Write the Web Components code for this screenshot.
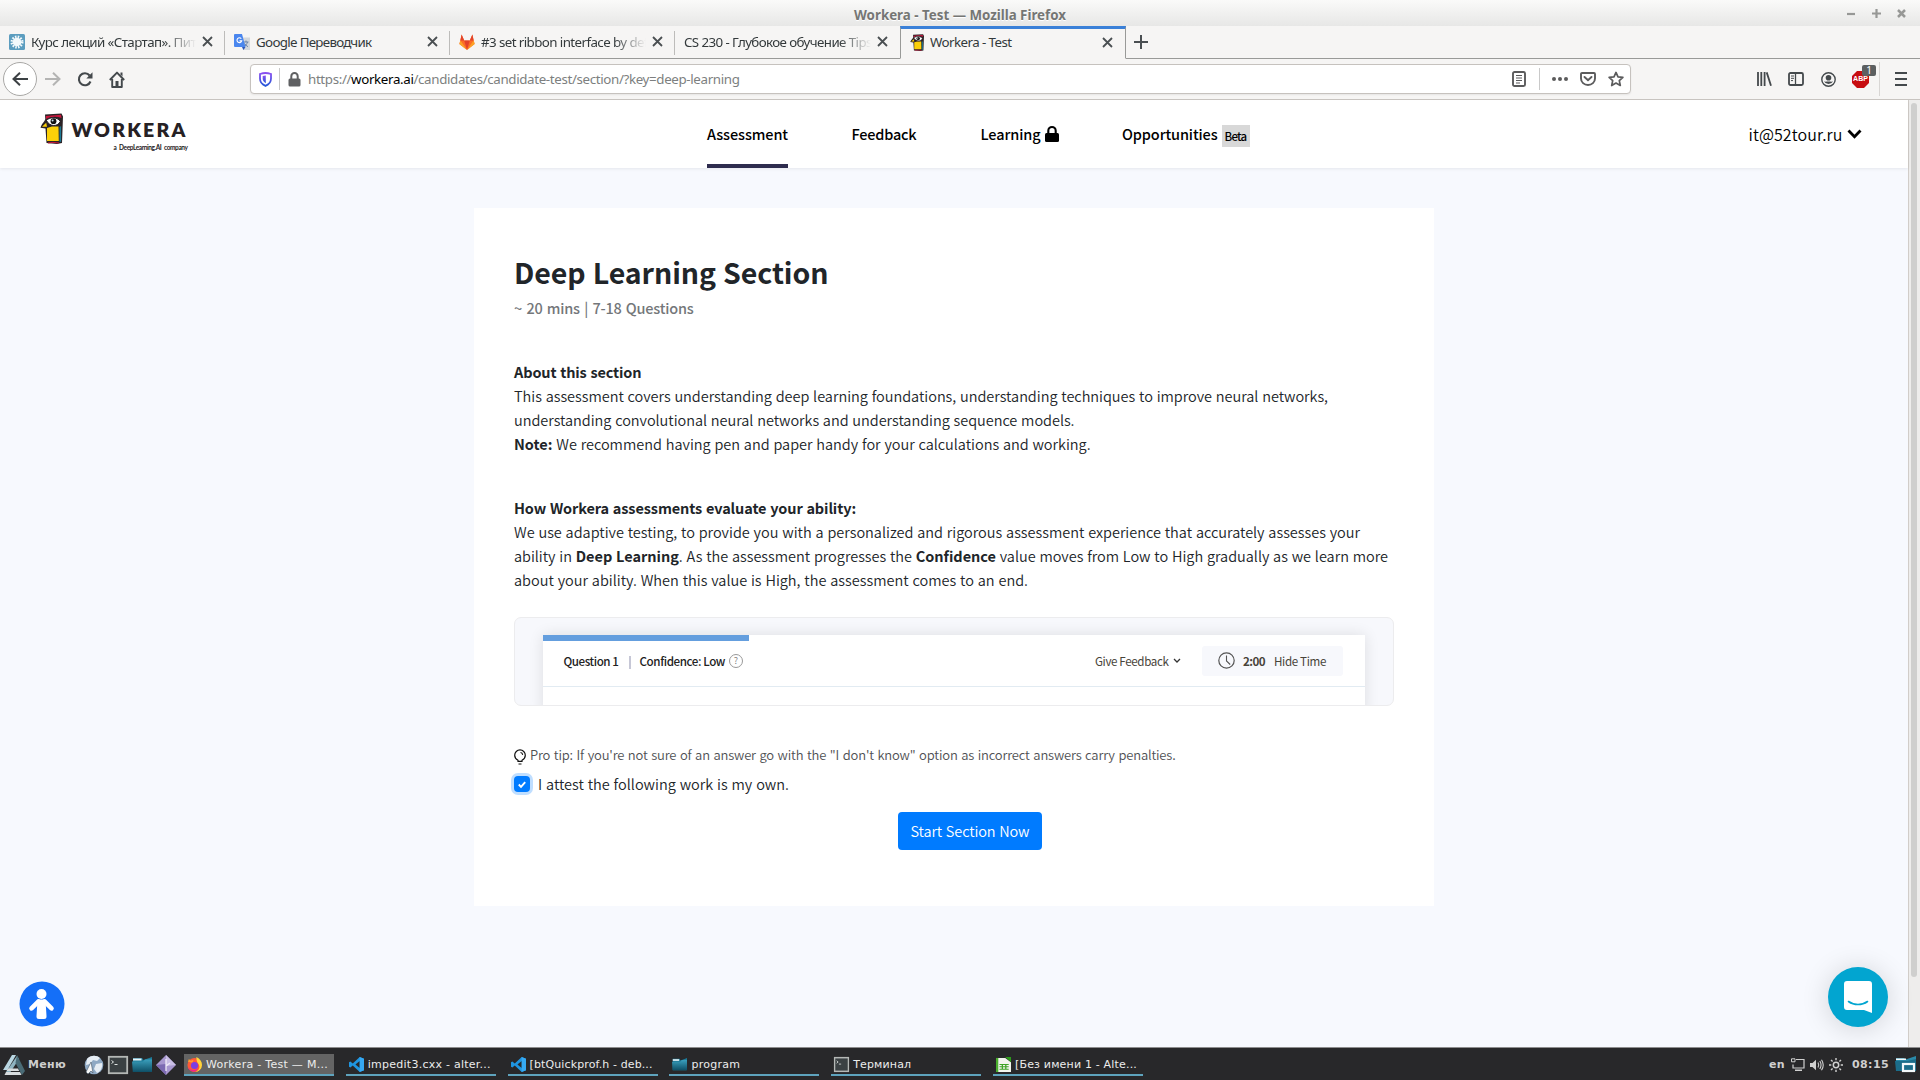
<!DOCTYPE html>
<html lang="ru">
<head>
<meta charset="utf-8">
<title>Workera - Test</title>
<style>
html,body{margin:0;padding:0;width:1920px;height:1080px;overflow:hidden;background:#f7f9fe}
</style>
</head>
<body>
<desktop-screen></desktop-screen>
<script>
const define = (name, css, html) => {
  const t = document.createElement('template');
  t.innerHTML = `<style>:host{box-sizing:border-box}*{box-sizing:border-box}${css}</style>${html}`;
  customElements.define(name, class extends HTMLElement {
    constructor(){ super(); this.attachShadow({mode:'open'}).append(t.content.cloneNode(true)); }
  });
};

/* ---------- icons: [viewBox width, height, markup] ---------- */
const ICONS = {
  close:[11,11,'<path d="M1 1l9 9M10 1l-9 9" stroke="#4a4f52" stroke-width="1.8" fill="none"/>'],
  plus:[14,14,'<path d="M7 0v14M0 7h14" stroke="#4a4f52" stroke-width="2"/>'],
  course:[16,16,'<rect width="16" height="16" rx="1.5" fill="#5c9dbf"/><circle cx="8" cy="8" r="4.300" fill="#f4f9fb"/><circle cx="8" cy="8" r="5.200" fill="none" stroke="#f4f9fb" stroke-width="2.600" stroke-dasharray="1.500 1.230"/>'],
  gtrans:[16,16,'<path d="M6 3.500h10V16H9z" fill="#d4d8dc"/><path d="M9.500 8h5M12 6.500V8M13.500 8c-.6 2.300-2 3.800-4 4.600M10.500 9.500c.9 1.400 2 2.500 3.500 3.200" stroke="#6b83a8" fill="none"/><path d="M0 1a1 1 0 0 1 1-1h7l3.500 13H1a1 1 0 0 1-1-1z" fill="#4a86ee"/><path d="M8 13h3.500L9.500 16z" fill="#2d58b8"/><path d="M7.300 4.700a2.400 2.400 0 1 0 .4 2.200H5.500" stroke="#fff" stroke-width="1.100" fill="none"/>'],
  gitlab:[17,16,'<path d="M8.500 16L.4 10 2.800.6 5.500 6.600h6L14.200.6 16.600 10z" fill="#fc6d26"/><path d="M8.500 16L5.500 6.600h6z" fill="#e24329"/><path d="M8.500 16L.4 10 1.500 6.600zM8.500 16l8.100-6-1.100-3.400z" fill="#fca326"/><path d="M1.500 6.600L2.800.6l2.700 6zM15.500 6.600L14.200.6l-2.700 6z" fill="#e24329"/>'],
  bird:[23,31,'<path d="M5 1.500L21.500.6 23 3.500 22 30l-5 1-10.500-1L5.500 15.500.5 14.800C1.500 11 5 8 5.300 6z" fill="#2b2326"/><path d="M7 15l5-1.500 6.500 0 .3 14.500H7z" fill="#fbd009"/><path d="M2 13.700l4.200-3.900.8 4z" fill="#fbd009"/><path d="M6 3l15-1.200L21.500 5C17 3.200 11 3.300 6 6z" fill="#c9153c"/><path d="M19.500 14l1.600-1V29l-1.600-.6z" fill="#1d7a94"/><path d="M6.500 7.500C9 4 17 3.500 20.300 8.300 18 14 9.500 14 6.500 7.500z" fill="#fff" stroke="#17121a" stroke-width=".9"/><circle cx="13.500" cy="8.200" r="2.900" fill="#111"/><circle cx="12.600" cy="7.500" r="1" fill="#c8dde8"/><path d="M8 30l5-.6 6 .6" stroke="#c9153c" fill="none"/>'],
  back:[16,14,'<path d="M16 7H2M8 .8L1.500 7 8 13.200" stroke="#3c4144" stroke-width="2" fill="none"/>'],
  forward:[16,14,'<path d="M0 7h14M8 .8L14.500 7 8 13.200" stroke="#b4b4b3" stroke-width="2" fill="none"/>'],
  reload:[16,15,'<path d="M12.600 3.500A6 6 0 1 0 13.500 9.500" stroke="#44494c" stroke-width="2.100" fill="none"/><path d="M15.500.3v6.200H9.300z" fill="#44494c"/>'],
  home:[16,17,'<path d="M.8 9L8 1.600 15.200 9M3.200 8v8h9.600V8" stroke="#44494c" stroke-width="1.900" fill="none" stroke-linejoin="round"/><path d="M6.500 10h3v6h-3z" fill="#44494c"/><path d="M11.500 1.500h2v4l-2-2z" fill="#44494c"/>'],
  shield:[13,15,'<defs><linearGradient id="s" x1="0" x2="0" y1="0" y2="1"><stop stop-color="#8b4ff0"/><stop offset="1" stop-color="#2458d8"/></linearGradient></defs><path d="M6.500 1C8.500 1 10.500 1.500 12 2v4.500c0 3.500-2.200 6-5.500 7.400C3.200 12.500 1 10 1 6.500V2C2.500 1.500 4.500 1 6.500 1z" stroke="url(#s)" stroke-width="1.800" fill="none"/><path d="M6.800 3.600c-1.200 0-2.200.2-3.100.5v2.500c0 2.200 1.200 3.600 3.100 4.700z" fill="url(#s)"/>'],
  lock:[13,15,'<rect x=".5" y="6.500" width="12" height="8" rx="1.500" fill="#5f6062"/><path d="M3.300 7V4.300a3.200 3.200 0 0 1 6.400 0V7" stroke="#5f6062" stroke-width="2" fill="none"/>'],
  reader:[14,16,'<rect x="1" y="1" width="12" height="14" rx="1.500" stroke="#5b5b5c" stroke-width="1.900" fill="none"/><path d="M4 4.500h6M4 7h6M4 9.500h6M4 12h4" stroke="#5b5b5c"/>'],
  dots:[16,4,'<g fill="#5b5b5c"><circle cx="2" cy="2" r="2"/><circle cx="8" cy="2" r="2"/><circle cx="14" cy="2" r="2"/></g>'],
  pocket:[16,14,'<path d="M2 1h12a1 1 0 0 1 1 1v4.500a7 6.500 0 0 1-14 0V2a1 1 0 0 1 1-1z" stroke="#5b5b5c" stroke-width="1.900" fill="none"/><path d="M4.500 5L8 8.300 11.500 5" stroke="#5b5b5c" stroke-width="1.900" fill="none" stroke-linecap="round"/>'],
  star:[16,16,'<path d="M8 1.400l2 4.400 4.900.5-3.600 3.300 1 4.900L8 12l-4.300 2.500 1-4.900L1.100 6.300 6 5.800z" stroke="#5b5b5c" stroke-width="1.700" fill="none" stroke-linejoin="round"/>'],
  library:[15,14,'<path d="M1 0v14M4.300 0v14M7.600 0v14M9.700.4L14 13.700" stroke="#44494c" stroke-width="1.800"/>'],
  sidebar:[16,14,'<rect x="1" y="1" width="14" height="12" rx="1.500" stroke="#44494c" stroke-width="1.800" fill="none"/><path d="M7.500 1v12" stroke="#44494c" stroke-width="1.300"/><path d="M3 4h3M3 6.300h3M3 8.600h2" stroke="#44494c"/>'],
  account:[15,15,'<circle cx="7.500" cy="7.500" r="6.700" stroke="#44494c" stroke-width="1.400" fill="none"/><circle cx="7.500" cy="5.700" r="2.800" fill="#44494c"/><path d="M3 9.300c1 .8 2.500.3 4.500.3s3.500.5 4.500-.3A5 5 0 0 1 3 9.300z" fill="#44494c"/>'],
  burger:[12,14,'<path d="M0 1h12M0 7h12M0 13h12" stroke="#44494c" stroke-width="2" />'],
  octagon:[17,17,'<path d="M5 0h7l5 5v7l-5 5H5l-5-5V5z" fill="#c70d10"/>'],
  wmin:[9,9,'<path d="M0 5h8" stroke="#979896" stroke-width="2.200"/>'],
  wmax:[9,9,'<path d="M0 4.500h9M4.500 0v9" stroke="#979896" stroke-width="2.200"/>'],
  wclose:[9,9,'<path d="M1 1l7 7M8 1L1 8" stroke="#979896" stroke-width="2.500"/>'],
  navlock:[14,16,'<rect y="7" width="14" height="9" rx="1.500" fill="#000"/><path d="M3.300 8V4.700a3.700 3.700 0 0 1 7.400 0V8" stroke="#000" stroke-width="2.100" fill="none"/>'],
  chevron:[15,10,'<path d="M1.500 1.500l6 6.300 6-6.300" stroke="#000" stroke-width="2.800" fill="none"/>'],
  smallchev:[8,6,'<path d="M1 1l3 3 3-3" stroke="#333" stroke-width="1.300" fill="none"/>'],
  clock:[17,17,'<circle cx="8.500" cy="8.500" r="7.700" stroke="#555" stroke-width="1.200" fill="none"/><path d="M8.500 3.500v5.500l3.700 3.500" stroke="#555" stroke-width="1.100" fill="none"/>'],
  bulb:[12,16,'<path d="M4 12.300v-1C2 10.200.7 8.500.7 6.200a5.300 5.300 0 0 1 10.600 0c0 2.300-1.300 4-3.300 5.100v1z" stroke="#111" stroke-width="1.200" fill="none"/><path d="M6.500 3.500c1.300.2 2 1 2.200 2.300M4.500 15h3" stroke="#111" stroke-width="1.100" fill="none"/>'],
  check:[8,7,'<path d="M.8 3.500l2.200 2.300L7.200 1.200" stroke="#fff" stroke-width="1.900" fill="none"/>'],
  person:[46,46,'<circle cx="23" cy="23" r="22.500" fill="#146ff8"/><g fill="#fff"><circle cx="22.500" cy="13" r="5"/><path d="M18.500 18.500h8L27.500 35.500q0 2.500-2.500 2.500h-5q-2.500 0-2.500-2.500z"/></g><path d="M19.500 20.500L12.500 27.300M25.500 20.500L32.500 27.300" stroke="#fff" stroke-width="4.600" stroke-linecap="round"/>'],
  chat:[28,32,'<path d="M3 0h22a3 3 0 0 1 3 3v29l-8-3H3a3 3 0 0 1-3-3V3a3 3 0 0 1 3-3z" fill="#fff"/><path d="M4.500 20.500c5.500 4 13.500 4 19 0" stroke="#02a5d0" stroke-width="1.600" fill="none" stroke-linecap="round"/>'],
  menu:[22,20,'<path d="M9 0h4L4.500 15H0z" fill="#b9d7e2"/><path d="M14 1l2 3L7.500 17H3z" fill="#8fb4c1"/><path d="M14 0l8 16-3 4L12.500 8z" fill="#4a6b76"/><path d="M5 13.500h10l1.200 2.500H3.500zM3 17h14l1.500 3H1.500z" fill="#d8dcde"/>'],
  globe:[20,20,'<circle cx="10" cy="10" r="9.300" fill="#8fa9c4"/><path d="M3 4c3-4 10-4 13-1l-3 3-4-1-3 4-4 1zM12 9l6-1c1 5-2 9-5 10l-3-4z" fill="#e6edf4"/><path d="M2 17l5-10 2 11-2-2-3 3z" fill="#f8f8f8" stroke="#456" stroke-width=".6"/>'],
  term:[20,18,'<rect x=".8" y=".8" width="18.400" height="16.400" fill="#3b4143" stroke="#b5b8b6" stroke-width="1.800"/><path d="M3.500 4.500l2 1.500-2 1.500M6.500 8.500h3" stroke="#dfe4e2" fill="none"/>'],
  folder:[20,16,'<defs><linearGradient id="f" x1="0" x2="0" y1="0" y2="1"><stop stop-color="#3a9fbc"/><stop offset="1" stop-color="#0e4f66"/></linearGradient></defs><path d="M1 1h9l1.500 2L20 0v14a1 1 0 0 1-1 1H1z" fill="#1d7b99"/><path d="M1 1.500h8.500v2H1z" fill="#e8f4f8"/><path d="M0 4.500h11l2-2h7V15H.8z" fill="url(#f)"/>'],
  diamond:[20,20,'<path d="M10 0l10 10-10 10L0 10z" fill="#a797cf"/><path d="M10 0l10 10-10 1z" fill="#c8bde4"/><path d="M0 10l10 10V9z" fill="#7c6ab2"/><path d="M10 4v12M10 11l4-3" stroke="#efeaf8" stroke-width="1.300"/>'],
  firefox:[16,16,'<circle cx="8" cy="8.500" r="7.500" fill="#ff5a36"/><path d="M10 0c4 2 6 5 6 8.500A7.500 7.500 0 0 1 8 16c4-1 6-4 5-7-.5-2-3-3-3-9z" fill="#ffd43a"/><path d="M1 5l1-3 2 2 3-1-1 3z" fill="#ff9a2d"/><circle cx="8" cy="9" r="3.800" fill="#7b3ee0"/><path d="M1 11c2 3 8 4 11 1-1 3-4 4-6 3.500S1.500 13 1 11z" fill="#f0268c"/>'],
  vscode:[14,14,'<path d="M10 0l4 1.700v10.600L10 14 3.500 8 1.300 9.800 0 9V5l1.300-.8L3.500 6zM10 3.700L6 7l4 3.300z" fill="#1f95e0"/><path d="M10 0l4 1.700v10.600L10 14z" fill="#36a9f3"/>'],
  calc:[13,16,'<path d="M0 1h8l5 4.500V16H0z" fill="#f2f4ee"/><path d="M8 0h5v5.500z" fill="#2e9b1c"/><path d="M0 1h2v15H0z" fill="#4aaf2e"/><path d="M3 8h8M3 10.500h8M3 13h8M5.500 7.500v6M8.500 7.500v6" stroke="#3fa326" stroke-width="1.100"/>'],
  monitor:[14,14,'<path d="M5 1.500h8v8.500H2V6.500" stroke="#d0d0d0" stroke-width="1.200" fill="none"/><path d="M.5.800h3.500v3H.5z" stroke="#d0d0d0" fill="none"/><path d="M4 11.500h7v1.500H4z" fill="#d0d0d0"/>'],
  speaker:[14,12,'<path d="M0 4h2.500L6 .8v10.400L2.500 8H0z" fill="#d0d0d0"/><path d="M8 3.500q1.500 2.500 0 5M9.800 2q2.500 4 0 8M11.500.7q3.500 5.300 0 10.600" stroke="#d0d0d0" stroke-width="1.100" fill="none"/>'],
  sun:[14,14,'<circle cx="7" cy="7" r="2.700" stroke="#d0d0d0" stroke-width="1.500" fill="none"/><path d="M7 0v2.300M7 11.700V14M0 7h2.300M11.700 7H14M2 2l1.600 1.600M10.400 10.400L12 12M2 12l1.600-1.600M10.400 3.600L12 2" stroke="#d0d0d0" stroke-width="1.400"/>'],
  desk:[22,17,'<path d="M1 2h8l1.500 1.500L21 0v15H1z" fill="#2a89a8"/><path d="M1 2.500h10v1.500H1z" fill="#f3fafc"/><path d="M0 5h12l9-2v12H1z" fill="#1b6d8a"/><rect x="8" y="8" width="11" height="7" fill="#1b6d8a" stroke="#f2f8fa" stroke-width="2.200"/>'],
};
customElements.define('ui-icon', class extends HTMLElement {
  constructor(){ super(); this.attachShadow({mode:'open'}); }
  connectedCallback(){
    const [vw,vh,m] = ICONS[this.getAttribute('name')];
    const w = this.getAttribute('w') || vw, h = this.getAttribute('h') || vh;
    this.shadowRoot.innerHTML = `<style>:host{display:block;flex:none;width:${w}px;height:${h}px}svg{display:block;overflow:visible}</style><svg width="${w}" height="${h}" viewBox="0 0 ${vw} ${vh}" preserveAspectRatio="none">${m}</svg>`;
  }
});

/* ---------- browser chrome ---------- */
define('window-title', `
:host{display:grid;grid-template-columns:1fr auto 1fr;align-items:center;height:26px;background:linear-gradient(#fafaf9,#e7e7e6);font:bold 13.33px/20px "Noto Sans",sans-serif;color:#757674;text-shadow:0 1px #fff}
.t{padding-top:4px}
.b{display:flex;gap:16px;justify-content:flex-end;padding:1px 14px 0 0}`,
`<span></span><div class="t"><fit-text w="212">Workera - Test — Mozilla Firefox</fit-text></div><div class="b"><ui-icon name="wmin"></ui-icon><ui-icon name="wmax"></ui-icon><ui-icon name="wclose"></ui-icon></div>`);

customElements.define('browser-tab', class extends HTMLElement {
  constructor(){ super(); this.attachShadow({mode:'open'}); }
  connectedCallback(){
    const ic = this.getAttribute('icon'), on = this.hasAttribute('active');
    this.shadowRoot.innerHTML = `<style>
:host{box-sizing:border-box;display:flex;align-items:center;width:225px;height:33px;padding:0 12px 1px 9px;gap:6px;flex:none;position:relative;border-bottom:1px solid #999a98}
:host([active]){width:226px;border:1px solid #999a98;border-top:3px solid #3a80d8;border-bottom-color:#f6f5f4;padding:0 12px 3px 9px}
:host(:not([active]):not([last]))::after{content:"";width:1px;height:24px;background:#bdbcba;position:absolute;right:0;top:5px}
.t{flex:1;min-width:0;overflow:hidden;white-space:nowrap;font:13.33px/20px "Noto Sans",sans-serif;color:#33393b}
.fade{letter-spacing:-.58px;-webkit-mask:linear-gradient(90deg,#000 calc(100% - 32px),transparent);mask:linear-gradient(90deg,#000 calc(100% - 32px),transparent)}
</style>${ic?`<ui-icon name="${ic}" w="${ic==='bird'?14:16}" h="${ic==='bird'?17:16}"></ui-icon>`:''}<div class="t ${this.hasAttribute('long')?'fade':''}"><slot></slot></div><ui-icon name="close"></ui-icon>`;
  }
});

define('tab-strip', `
:host{display:flex;height:33px;background:#f6f5f4}
.rest{flex:1;border-bottom:1px solid #999a98;display:flex;align-items:center;padding:0 0 0 8px}
ui-icon{margin-bottom:1px}`,
`<browser-tab icon="course" long>Курс лекций «Стартап». Питер</browser-tab>
<browser-tab icon="gtrans"><fit-text w="115.500">Google Переводчик</fit-text></browser-tab>
<browser-tab icon="gitlab" long>#3 set ribbon interface by default</browser-tab>
<browser-tab long last>CS 230 - Глубокое обучение Tips and</browser-tab>
<browser-tab icon="bird" active><fit-text w="81.500">Workera - Test</fit-text></browser-tab>
<div class="rest"><ui-icon name="plus"></ui-icon></div>`);

define('nav-toolbar', `
:host{display:flex;align-items:center;height:41px;background:#f6f5f4;border-bottom:1px solid #c8c4c0;padding:0 13px 0 3px;font:13.33px/20px "Noto Sans",sans-serif}
.back{width:34px;height:34px;border:1px solid #a9a8a6;border-radius:50%;background:#fff;display:flex;align-items:center;justify-content:center;margin-right:8px}
.url{display:flex;align-items:center;width:1381px;height:30px;border:1px solid #c6c2be;border-radius:4px;background:#fff;margin-left:125px;padding:0 6px 0 8px;box-shadow:0 1px 2px #0001;color:#7d7f80}
.sep{width:1px;height:22px;background:#c9c9c9}
b{font-weight:400;color:#000}
.abp{position:relative;display:flex;align-items:center;justify-content:center;width:17px;height:17px;margin-left:16px}
.abp span{position:absolute;font:bold 7px/8px "Liberation Sans",sans-serif;color:#fff}
.abp em{position:absolute;left:10px;top:-6px;width:14px;height:11px;border-radius:2px;background:#5c5f60;color:#fff;font:normal 10px/11px "Noto Sans",sans-serif;text-align:center}
.end{width:1px;height:34px;background:#d8d6d4;margin:0 15px 0 10px}`,
`<div class="back"><ui-icon name="back"></ui-icon></div><ui-icon name="forward"></ui-icon>
<ui-icon name="reload" style="margin-left:16px"></ui-icon><ui-icon name="home" style="margin:0 0 0 16px"></ui-icon>
<div class="url"><ui-icon name="shield"></ui-icon><span class="sep" style="margin:0 8px 0 7px"></span><ui-icon name="lock"></ui-icon>
<span style="margin-left:7px;flex:1"><fit-text w="431.500">https://<b>workera.ai</b>/candidates/candidate-test/section/?key=deep-learning</fit-text></span>
<ui-icon name="reader"></ui-icon><span class="sep" style="margin:0 12px 0 13px"></span><ui-icon name="dots"></ui-icon><ui-icon name="pocket" style="margin-left:12px"></ui-icon><ui-icon name="star" style="margin-left:12px"></ui-icon></div>
<span style="flex:1"></span>
<ui-icon name="library"></ui-icon><ui-icon name="sidebar" style="margin-left:16px"></ui-icon><ui-icon name="account" style="margin-left:17px"></ui-icon>
<div class="abp"><ui-icon name="octagon"></ui-icon><span>ABP</span><em>1</em></div><span class="end"></span><ui-icon name="burger"></ui-icon>`);

/* ---------- page ---------- */
define('site-header', `
:host{display:flex;height:68px;background:#fff;box-shadow:0 1px 3px #00001a14;position:relative;font:500 14.5px/24px "Noto Sans CJK SC","Noto Sans CJK JP",sans-serif;color:#000}
.logo{display:flex;width:707px;padding:13px 0 0 39.500px}
.word{display:flex;flex-direction:column;align-items:flex-end;width:116px;margin-left:9px;padding-top:5px;color:#262124}
.w1{font:800 19.500px/24px Lato,sans-serif;height:26px}
.w2{font:bold 6.500px/8px Lato,sans-serif;word-spacing:1.500px}
.item{display:flex;align-items:flex-start;padding-top:22px;height:68px}
.on{border-bottom:4px solid #2e2c4e}
.beta{background:#d8d8d8;font-size:11.5px;line-height:22px;width:28px;height:22px;margin:3px 0 0 4px;padding-left:3px}
.user{font-weight:350;font-size:16px}`,
`<div class="logo"><ui-icon name="bird"></ui-icon><div class="word"><div class="w1"><fit-text w="116">WORKERA</fit-text></div><div class="w2"><fit-text w="74">a DeepLearning.AI company</fit-text></div></div></div>
<div class="item on"><fit-text w="81">Assessment</fit-text></div>
<div class="item" style="margin-left:63.500px"><fit-text w="65">Feedback</fit-text></div>
<div class="item" style="margin-left:64px"><fit-text w="60">Learning</fit-text><ui-icon name="navlock" style="margin:4px 0 0 4px"></ui-icon></div>
<div class="item" style="margin-left:63.500px"><fit-text w="95.500">Opportunities</fit-text><span class="beta"><fit-text w="22">Beta</fit-text></span></div>
<span style="flex:1"></span>
<div class="item user"><fit-text w="94">it@52tour.ru</fit-text><ui-icon name="chevron" style="margin:7px 46.500px 0 4px"></ui-icon></div>`);

define('confidence-preview', `
:host{display:block;width:880px;height:89px;margin-top:25px;border:1px solid #ececee;border-radius:7px;background:#f7f8fc;overflow:hidden;padding:17px 28px 0;font:500 11.600px/18px "Noto Sans CJK SC","Noto Sans CJK JP",sans-serif;word-spacing:0;color:#222}
.in{background:#fff;height:80px;box-shadow:0 0 14px #0000001c}
.bar{width:206px;height:6px;background:#649ede}
.row{display:flex;align-items:center;height:46px;border-bottom:1px solid #e2ebf2;padding:0 22px 6px 20.500px;height:46px}
.q{width:14px;height:14px;border:1px solid #999;border-radius:50%;font:9px/12px "Noto Sans CJK SC",sans-serif;text-align:center;color:#888;margin-left:4px}
.v{width:2px;height:13px;background:#c6c7d6;margin:3px 9px 0 10px}
.time{display:flex;align-items:center;background:#f7f8fc;border-radius:3px;width:141px;height:30px;padding-left:16px;margin-left:21px}
.br{color:#48443a;font-weight:400}`,
`<div class="in"><div class="bar"></div><div class="row"><fit-text w="55">Question 1</fit-text><span class="v"></span><fit-text w="85.500">Confidence: Low</fit-text><span class="q">?</span><span style="flex:1"></span><span class="br"><fit-text w="73.500">Give Feedback</fit-text></span><ui-icon name="smallchev" style="margin-left:4.500px"></ui-icon><div class="time br"><ui-icon name="clock"></ui-icon><b style="margin-left:8px"><fit-text w="22">2:00</fit-text></b><span style="margin-left:9px"><fit-text w="52">Hide Time</fit-text></span></div></div></div>`);

define('attest-check', `
:host{display:flex;align-items:center;height:24px;margin-top:7px}
.c{width:16px;height:16px;border-radius:4px;background:#007bff;box-shadow:0 0 0 3px #007bff40;display:flex;align-items:center;justify-content:center;margin-right:8px}`,
`<span class="c"><ui-icon name="check"></ui-icon></span><fit-text w="251"><slot></slot></fit-text>`);

define('start-button', `
:host{display:flex;align-items:center;justify-content:center;width:144px;height:38px;border-radius:4px;background:#007bff;color:#fff;margin:16px 0 0 384px}`,
`<slot></slot>`);

define('section-card', `
:host{display:block;width:960px;height:698px;margin:40px 0 0 474px;background:#fff;padding:44.500px 40px 0;font:350 14.5px/24px "Noto Sans CJK SC","Noto Sans CJK JP",sans-serif;color:#212529;word-spacing:.6px}
h1{margin:0;font-size:28.5px;line-height:38px;height:38px}
b{font-weight:700}
.sub{color:#74777a;font-weight:500;margin-top:5.500px;word-spacing:1.300px}
.p{margin-top:40px;display:flex;flex-direction:column;align-items:flex-start}
.tip{display:flex;align-items:center;margin-top:39px;font-size:13px;line-height:20px;height:20px;color:#4f5154;gap:4px;word-spacing:.9px}`,
`<h1><fit-text w="314.500">Deep Learning Section</fit-text></h1>
<div class="sub"><fit-text w="179.500">~ 20 mins | 7-18 Questions</fit-text></div>
<div class="p"><fit-text w="127.500"><b>About this section</b></fit-text>
<fit-text w="814">This assessment covers understanding deep learning foundations, understanding techniques to improve neural networks,</fit-text>
<fit-text w="560.500">understanding convolutional neural networks and understanding sequence models.</fit-text>
<fit-text w="576.500"><b>Note:</b> We recommend having pen and paper handy for your calculations and working.</fit-text></div>
<div class="p"><fit-text w="342"><b>How Workera assessments evaluate your ability:</b></fit-text>
<fit-text w="846">We use adaptive testing, to provide you with a personalized and rigorous assessment experience that accurately assesses your</fit-text>
<fit-text w="874">ability in <b>Deep Learning</b>. As the assessment progresses the <b>Confidence</b> value moves from Low to High gradually as we learn more</fit-text>
<fit-text w="514">about your ability. When this value is High, the assessment comes to an end.</fit-text></div>
<confidence-preview></confidence-preview>
<div class="tip"><ui-icon name="bulb" style="margin-top:3px"></ui-icon><fit-text w="645.500">Pro tip: If you're not sure of an answer go with the "I don't know" option as incorrect answers carry penalties.</fit-text></div>
<attest-check>I attest the following work is my own.</attest-check>
<start-button><fit-text w="119">Start Section Now</fit-text></start-button>`);

define('page-view', `
:host{display:flex;height:947px;background:#f7f9fe;position:relative;overflow:hidden}
.doc{flex:1}
.bar{width:12px;background:#eeedec;border-left:1px solid #d1cdc9;padding:3px 0 0 2px}
.thumb{width:6px;height:874px;border-radius:3px;background:#cfcfce}
.a11y{position:absolute;left:19px;top:881px}
.chat{position:absolute;left:1828px;top:867px;width:60px;height:60px;border-radius:50%;background:#02a5d0;box-shadow:0 2px 28px #00000028;display:flex;align-items:center;justify-content:center}`,
`<div class="doc"><site-header></site-header><section-card></section-card></div><div class="bar"><div class="thumb"></div></div>
<ui-icon class="a11y" name="person"></ui-icon><div class="chat"><ui-icon name="chat"></ui-icon></div>`);

/* ---------- taskbar ---------- */
customElements.define('task-button', class extends HTMLElement {
  constructor(){ super(); this.attachShadow({mode:'open'}); }
  connectedCallback(){
    this.shadowRoot.innerHTML = `<style>:host{box-sizing:border-box;display:flex;align-items:center;width:150px;height:22px;border-bottom:2px solid #5ea3bd;gap:4px;padding:1px 0 0 3px;flex:none}
:host([active]){background:#646464}</style><ui-icon name="${this.getAttribute('icon')}" w="${this.getAttribute('iw')||15}" h="${this.getAttribute('ih')||15}"></ui-icon><slot></slot>`;
  }
});
define('task-bar', `
:host{display:flex;height:33px;background:#28282a;border-top:1px solid #8d8d8e;padding:0 3px 0 3px;font:11px/16px "DejaVu Sans",sans-serif;color:#ececec}
.c{display:flex;align-items:center;height:32px;padding-top:1px;font-weight:bold;color:#cfcfcf}
.tasks{display:flex;gap:11.800px;padding-top:6px;margin-left:8px}`,
`<div class="c"><ui-icon name="menu"></ui-icon><span style="margin:0 17px 0 3px"><fit-text w="38">Меню</fit-text></span>
<ui-icon name="globe" style="margin-left:.5px"></ui-icon><ui-icon name="term" style="margin-left:4.500px"></ui-icon><ui-icon name="folder" style="margin-left:4px"></ui-icon><ui-icon name="diamond" style="margin-left:4px"></ui-icon></div>
<div class="tasks"><task-button icon="firefox" active><fit-text w="122">Workera - Test — M...</fit-text></task-button>
<task-button icon="vscode"><fit-text w="123">impedit3.cxx - alter...</fit-text></task-button>
<task-button icon="vscode"><fit-text w="123">[btQuickprof.h - deb...</fit-text></task-button>
<task-button icon="folder" ih="13"><fit-text w="49">program</fit-text></task-button>
<task-button icon="term"><fit-text w="58">Терминал</fit-text></task-button>
<task-button icon="calc"><fit-text w="122">[Без имени 1 - Alte...</fit-text></task-button></div>
<span style="flex:1"></span>
<div class="c"><fit-text w="16">en</fit-text><ui-icon name="monitor" style="margin-left:6px"></ui-icon><ui-icon name="speaker" style="margin-left:5px"></ui-icon><ui-icon name="sun" style="margin-left:5px"></ui-icon><span style="margin-left:9px"><fit-text w="37">08:15</fit-text></span><ui-icon name="desk" style="margin-left:6px"></ui-icon></div>`);

define('desktop-screen', `:host{display:flex;flex-direction:column;width:1920px;height:1080px}`,
`<window-title></window-title><tab-strip></tab-strip><nav-toolbar></nav-toolbar><page-view></page-view><task-bar></task-bar>`);

/* Single line of text tracked out to the width given in `w`. */
customElements.define('fit-text', class extends HTMLElement {
  constructor(){
    super();
    this.attachShadow({mode:'open'}).innerHTML = '<style>:host{display:inline-block;white-space:pre;flex:none;vertical-align:top}</style><slot></slot>';
  }
  connectedCallback(){
    const w = parseFloat(this.getAttribute('w'));
    const slot = this.querySelector('slot');
    const text = slot ? slot.assignedNodes().map(n => n.textContent).join('') : this.textContent;
    this.style.letterSpacing = '0';
    const natural = this.getBoundingClientRect().width;
    this.style.letterSpacing = ((w - natural) / text.length).toFixed(4) + 'px';
    this.style.width = w + 'px';
  }
});
</script>
</body>
</html>
